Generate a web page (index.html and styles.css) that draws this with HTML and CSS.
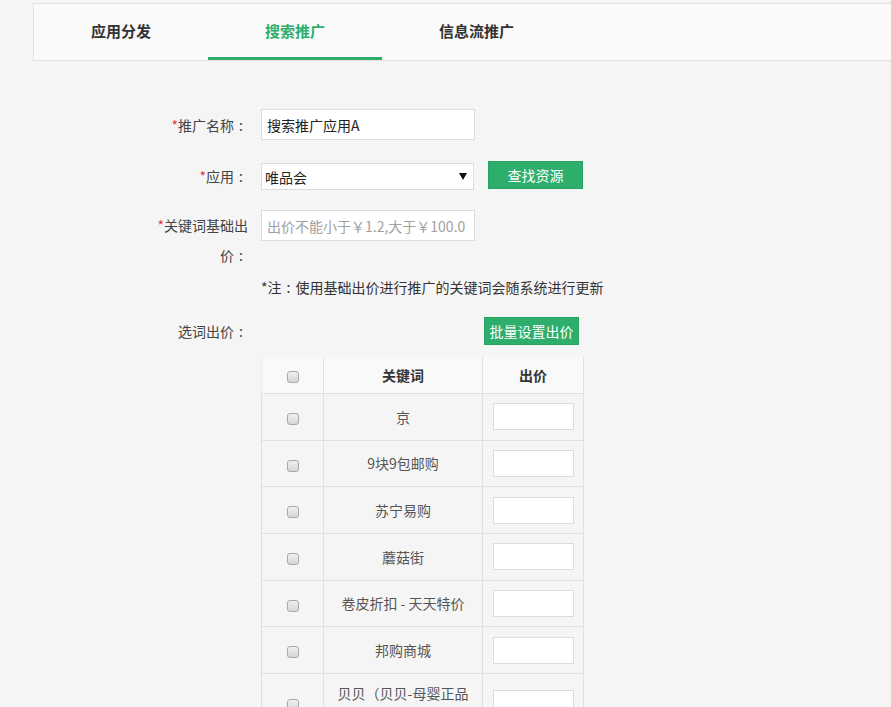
FILE: index.html
```html
<!DOCTYPE html>
<html lang="zh-CN">
<head>
<meta charset="utf-8">
<title>搜索推广</title>
<link rel="stylesheet" href="styles.css">
</head>
<body>
<div class="page">
  <nav class="tabs">
    <a class="tab">应用分发</a>
    <a class="tab active">搜索推广</a>
    <a class="tab">信息流推广</a>
  </nav>

  <form class="form">
    <div class="row row-name">
      <label class="label"><span class="req">*</span>推广名称<span class="colon">:</span></label>
      <input class="text-input" type="text" value="搜索推广应用A">
    </div>

    <div class="row row-app">
      <label class="label"><span class="req">*</span>应用<span class="colon">:</span></label>
      <div class="select-wrap">
        <select class="select"><option>唯品会</option></select>
      </div>
      <button type="button" class="btn btn-find">查找资源</button>
    </div>

    <div class="row row-price">
      <label class="label"><span class="req">*</span>关键词基础出价<span class="colon">:</span></label>
      <input class="text-input" type="text" placeholder="出价不能小于￥1.2,大于￥100.0">
    </div>

    <p class="note">*注<span class="colon">:</span>使用基础出价进行推广的关键词会随系统进行更新</p>

    <div class="row row-bid">
      <label class="label">选词出价<span class="colon">:</span></label>
      <div class="bid-actions">
        <button type="button" class="btn btn-batch">批量设置出价</button>
      </div>
    </div>

    <div class="table-wrap">
      <table class="kw-table">
        <colgroup>
          <col class="c-check">
          <col class="c-word">
          <col class="c-price">
        </colgroup>
        <thead>
          <tr>
            <th><input type="checkbox" class="cb"></th>
            <th>关键词</th>
            <th>出价</th>
          </tr>
        </thead>
        <tbody>
          <tr><td><input type="checkbox" class="cb"></td><td>京</td><td><input class="price-input" type="text"></td></tr>
          <tr><td><input type="checkbox" class="cb"></td><td>9块9包邮购</td><td><input class="price-input" type="text"></td></tr>
          <tr><td><input type="checkbox" class="cb"></td><td>苏宁易购</td><td><input class="price-input" type="text"></td></tr>
          <tr><td><input type="checkbox" class="cb"></td><td>蘑菇街</td><td><input class="price-input" type="text"></td></tr>
          <tr><td><input type="checkbox" class="cb"></td><td>卷皮折扣 - 天天特价</td><td><input class="price-input" type="text"></td></tr>
          <tr><td><input type="checkbox" class="cb"></td><td>邦购商城</td><td><input class="price-input" type="text"></td></tr>
          <tr><td><input type="checkbox" class="cb"></td><td>贝贝（贝贝-母婴正品特卖）</td><td><input class="price-input" type="text"></td></tr>
        </tbody>
      </table>
    </div>
  </form>
</div>
</body>
</html>
```

FILE: styles.css
```css
html, body {
  margin: 0;
  padding: 0;
  overflow: hidden;
}

body {
  background: #f5f5f5;
  font-family: "Noto Sans CJK SC", "Noto Sans", "Liberation Sans", sans-serif;
  font-size: 14px;
  color: #444;
}

.page {
  padding-top: 3px;
  padding-left: 33px;
}

/* Tabs */
.tabs {
  display: flex;
  height: 56px;
  background: #fafafa;
  border: 1px solid #e2e2e2;
  margin-right: -4px;
}

.tab {
  display: block;
  padding: 0 57px;
  height: 56px;
  line-height: 54px;
  font-size: 15px;
  font-weight: bold;
  color: #333;
  cursor: pointer;
}

.tab.active {
  color: #2eae6c;
  box-shadow: inset 0 -3px 0 #2eae6c;
}

/* Form */
.form {
  margin: 48px 0 0 0;
}

.row {
  display: flex;
  align-items: center;
}

.label {
  width: 95px;
  margin-left: 120px;
  margin-right: 13px;
  text-align: right;
  line-height: 30px;
  color: #444;
  flex: none;
}

.colon {
  display: inline-block;
  width: 14px;
  text-align: center;
}

.req {
  color: #e4393c;
}

.text-input {
  box-sizing: border-box;
  width: 214px;
  height: 31px;
  border: 1px solid #dcdcdc;
  background: #fff;
  padding: 0 6px 0 5px;
  font-family: inherit;
  font-size: 14px;
  color: #222;
  outline: none;
  margin: 0;
}

.text-input::placeholder {
  color: #a0a0a0;
}

.row-app {
  margin-top: 23px;
  align-items: flex-start;
}

.row-app .label {
  line-height: 27px;
}

.select-wrap {
  position: relative;
  width: 213px;
  height: 27px;
}

.select-wrap::after {
  content: "";
  position: absolute;
  right: 7px;
  top: 10px;
  border-left: 4px solid transparent;
  border-right: 4px solid transparent;
  border-top: 7px solid #111;
  pointer-events: none;
}

.select {
  appearance: none;
  -webkit-appearance: none;
  box-sizing: border-box;
  width: 213px;
  height: 27px;
  border: 1px solid #dcdcdc;
  border-radius: 0;
  background: #fff;
  padding: 0 20px 0 3px;
  font-family: inherit;
  font-size: 14px;
  color: #222;
  margin: 0;
}

.btn {
  box-sizing: border-box;
  height: 28px;
  border: 1px solid #27a362;
  background: #2eae6c;
  color: #fff;
  font-family: inherit;
  font-size: 14px;
  line-height: 26px;
  padding: 0;
  margin: 0;
  cursor: pointer;
}

.btn-find {
  width: 95px;
  margin-left: 14px;
  margin-top: -2px;
}

.row-price {
  margin-top: 20px;
  align-items: flex-start;
}

.note {
  margin: 7px 0 0 228px;
  line-height: 20px;
  color: #333;
}

.row-bid {
  margin-top: 19px;
}

.bid-actions {
  width: 322px;
  display: flex;
  justify-content: flex-end;
}

.btn-batch {
  width: 95px;
  margin-right: 4px;
}

/* Table */
.table-wrap {
  margin: 11px 0 0 228px;
}

.kw-table {
  border-collapse: collapse;
  table-layout: fixed;
  width: 322px;
  color: #555;
}

.c-check { width: 62px; }
.c-word { width: 159px; }
.c-price { width: 101px; }

.kw-table th,
.kw-table td {
  border: 1px solid #e0e0e0;
  text-align: center;
  vertical-align: middle;
}

.kw-table th {
  background: #f9f9f9;
  border-top: none;
  border-left-color: #ececec;
  padding: 8px 0;
  line-height: 20px;
  font-weight: bold;
  color: #333;
}

.kw-table td {
  padding: 9.33px 10px;
  line-height: 20px;
}

.kw-table td:first-child {
  padding-left: 0;
  padding-right: 0;
}

.kw-table td:last-child {
  padding: 9.33px 0 9.33px 0;
}

.price-input {
  box-sizing: border-box;
  display: block;
  width: 81px;
  height: 27px;
  margin: 0 auto;
  border: 1px solid #dcdcdc;
  background: #fff;
  outline: none;
}

.cb {
  appearance: none;
  -webkit-appearance: none;
  box-sizing: border-box;
  width: 12px;
  height: 12px;
  margin: 0;
  border: 1px solid #a9a9a9;
  border-radius: 3px;
  background: linear-gradient(#f0f0f0, #d6d6d6);
  vertical-align: middle;
  display: inline-block;
}
```
